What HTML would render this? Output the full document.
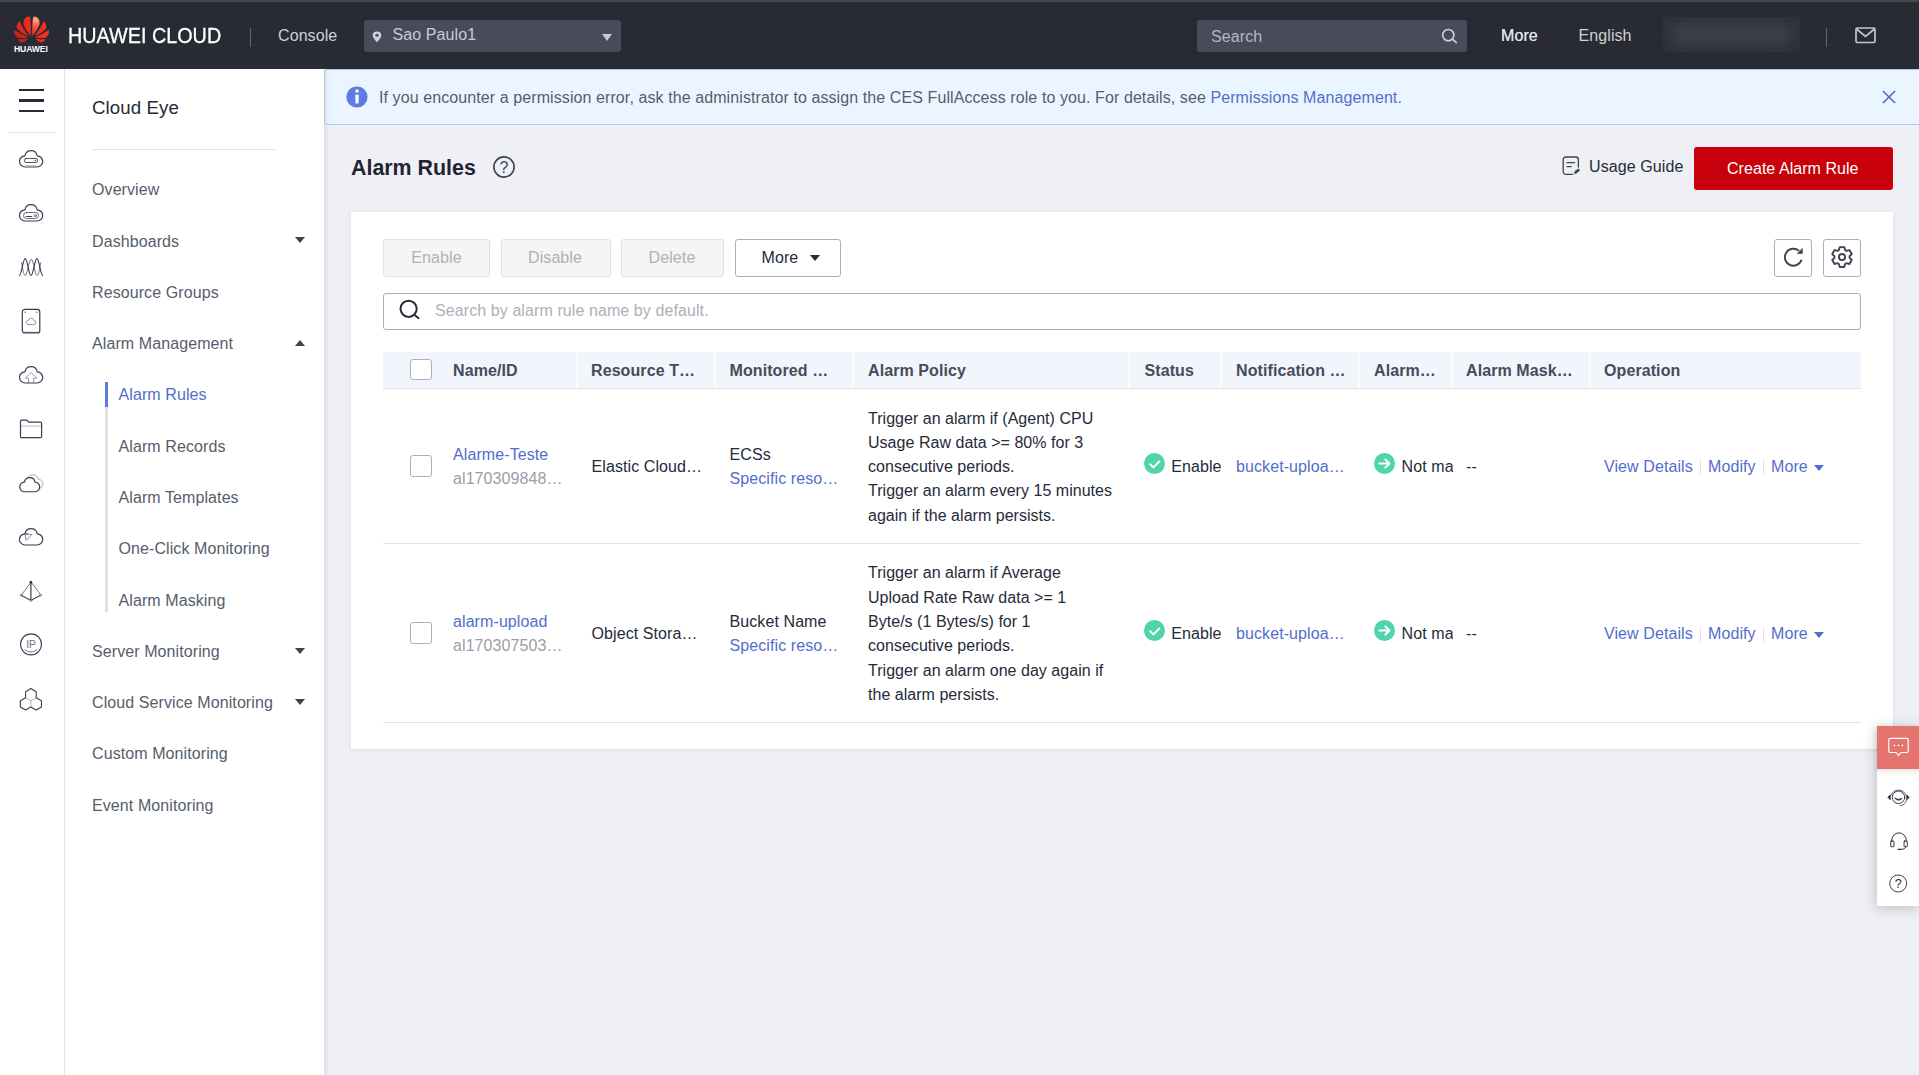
<!DOCTYPE html>
<html lang="en">
<head>
<meta charset="utf-8">
<title>Cloud Eye - Alarm Rules</title>
<style>
*{box-sizing:border-box;margin:0;padding:0}
html,body{width:1919px;height:1075px;overflow:hidden}
body{position:relative;font-family:"Liberation Sans",Arial,sans-serif;font-size:16px;letter-spacing:.09px;color:#252b3a;background:#eff0f5}
.abs,.t{position:absolute}
.t{line-height:24px;white-space:nowrap}
svg{position:absolute;overflow:visible}
a{color:#526ecc;text-decoration:none}

/* top */
#strip{left:0;top:0;width:1919px;height:2px;background:#454745}
#hdr{left:0;top:2px;width:1919px;height:66.5px;background:#282b33}
#hdr .t{color:#cfd1d7}
#brand{left:68.2px;top:19px;font-size:21.4px;line-height:30px;letter-spacing:0;color:#fff!important;transform:scaleX(.925);transform-origin:0 0;-webkit-text-stroke:.3px #fff}
#logotxt{left:14px;top:41px;font-size:8.6px;line-height:12px;font-weight:bold;color:#fff!important;letter-spacing:-.1px}
.vsep{width:1px;background:#62656f}
.dbox{background:#474b5a;border-radius:3px}

/* left rail */
#rail{left:0;top:68.5px;width:65px;height:1007px;background:#fff;border-right:1px solid #dfe1e6}
#side{left:65px;top:68.5px;width:259px;height:1007px;background:#fff}
.s{left:92px;color:#575d6c}
.s.sub{left:118.5px}
.s.on{color:#526ecc}
.car{position:absolute;width:0;height:0;border-left:5px solid transparent;border-right:5px solid transparent}
.car.dn{border-top:6px solid #3e4352}
.car.up{border-bottom:6px solid #3e4352}

/* main */
#banner{left:324px;top:69px;width:1596px;height:56px;background:#ebf5ff;border:1px solid #b8c6f4;border-radius:3px 0 0 3px}
#card{left:351px;top:212px;width:1542px;height:537px;background:#fff;box-shadow:0 1px 4px rgba(60,64,80,.10)}
.btn{position:absolute;top:239px;height:38px;border:1px solid #adb0b8;border-radius:3px;background:#fff;text-align:center;line-height:35px;color:#252b3a}
.btn.dis{background:#f5f5f6;border-color:#dfe1e6;color:#adb0b8}
.cb{position:absolute;width:22px;height:21.5px;border:1px solid #adb0b8;border-radius:3px;background:#fff}
#thead{left:383px;top:352px;width:1478px;height:37px;background:#f2f5fc;border-bottom:1px solid #dfe1e6}
.th{position:absolute;top:358.5px;line-height:24px;font-weight:bold;color:#464c59;white-space:nowrap}
.csep{position:absolute;top:352px;width:2px;height:36px;background:#fbfcff}
.hr{position:absolute;left:383px;width:1478px;height:1px;background:#dfe1e6}
.gray{color:#9b9ea6}
</style>
</head>
<body>
<div id="strip" class="abs"></div>
<div id="hdr" class="abs">
  <!-- Huawei logo -->
  <svg style="left:14.050px;top:13.900px" width="35.100" height="27" viewBox="130 170 755 580">
    <defs>
      <radialGradient id="lg1" gradientUnits="userSpaceOnUse" cx="600" cy="250" r="330"><stop offset="0" stop-color="#ffb08a"/><stop offset=".45" stop-color="#f4553c"/><stop offset="1" stop-color="#ec2a1e"/></radialGradient>
      <linearGradient id="lg2" gradientUnits="userSpaceOnUse" x1="700" y1="250" x2="200" y2="720"><stop offset="0" stop-color="#f13324"/><stop offset=".6" stop-color="#ea271c"/><stop offset="1" stop-color="#b81f18"/></linearGradient>
    </defs>
    <g fill="url(#lg2)">
      <path d="M492 600C400 480 310 360 340 270C360 200 430 170 470 185C495 260 495 450 492 600Z"/>
      <path d="M450 605C380 520 290 400 250 285C200 330 170 400 200 450C270 520 380 580 450 605Z"/>
      <path d="M566 605C636 520 726 400 766 285C816 330 846 400 816 450C746 520 636 580 566 605Z"/>
      <path d="M430 632C330 580 220 520 140 472C120 520 140 580 200 640C280 650 370 645 430 632Z"/>
      <path d="M586 632C686 580 796 520 876 472C896 520 876 580 816 640C736 650 646 645 586 632Z"/>
      <path d="M205 668L420 665C390 700 340 735 290 745C250 720 220 695 205 668Z"/>
      <path d="M811 668L596 665C626 700 676 735 726 745C766 720 796 695 811 668Z"/>
    </g>
    <path fill="url(#lg1)" d="M524 600C616 480 706 360 676 270C656 200 586 170 546 185C521 260 521 450 524 600Z"/>
  </svg>
  <div class="t" id="logotxt">HUAWEI</div>
  <div class="t" id="brand">HUAWEI CLOUD</div>
  <div class="abs vsep" style="left:250px;top:26px;height:19px"></div>
  <div class="t" style="left:278px;top:21.500px">Console</div>
  <div class="abs dbox" style="left:364px;top:18px;width:257px;height:32px"></div>
  <svg style="left:372px;top:28.600px" width="10" height="11.500" viewBox="0 0 10 13" preserveAspectRatio="none"><path d="M5 .6A4.3 4.300 0 0 0 .7 4.900C.7 8 5 12.600 5 12.600S9.300 8 9.300 4.900A4.300 4.300 0 0 0 5 .6Z" fill="#d0d2d8"/><circle cx="5" cy="4.900" r="1.700" fill="#474b5a"/></svg>
  <div class="t" style="left:392.500px;top:20.500px;color:#c9cbd2">Sao Paulo1</div>
  <div class="car dn" style="left:601.500px;top:32px;border-top-color:#c9cbd2;border-top-width:7px"></div>
  <div class="abs dbox" style="left:1197px;top:18px;width:270px;height:32px"></div>
  <div class="t" style="left:1211px;top:22.500px;color:#b4b7c0">Search</div>
  <svg style="left:1440px;top:25px" width="18" height="18" viewBox="0 0 18 18"><circle cx="8.300" cy="8.100" r="5.600" fill="none" stroke="#d0d2d8" stroke-width="1.600"/><path d="M12.400 12.200 L16.300 15.700" stroke="#d0d2d8" stroke-width="1.700" stroke-linecap="round"/></svg>
  <div class="t" style="left:1501px;top:21.500px;color:#e2e3e8;text-shadow:0 0 .4px #e2e3e8">More</div>
  <div class="t" style="left:1578.500px;top:21.500px">English</div>
  <div class="abs" style="left:1663px;top:15px;width:137px;height:35px;background:#2e313a;overflow:hidden"><div class="abs" style="left:8px;top:7px;width:121px;height:20px;background:#3e414b;border-radius:10px;filter:blur(7px)"></div></div>
  <div class="abs vsep" style="left:1826px;top:26px;height:19px"></div>
  <svg style="left:1855px;top:25px" width="21" height="17" viewBox="0 0 21 17"><rect x="1" y="1" width="19" height="14.500" rx="1.500" fill="none" stroke="#c4c6cf" stroke-width="1.700"/><path d="M1.500 2 L10.500 9.300 L19.500 2" fill="none" stroke="#c4c6cf" stroke-width="1.700"/></svg>
</div>

<!-- icon rail -->
<div id="rail" class="abs"></div>
<div id="side" class="abs"></div>
<!-- hamburger -->
<div class="abs" style="left:19px;top:88.500px;width:25px;height:2.500px;background:#252b3a"></div>
<div class="abs" style="left:19px;top:99px;width:25px;height:2.500px;background:#252b3a"></div>
<div class="abs" style="left:19px;top:109.500px;width:25px;height:2.500px;background:#252b3a"></div>
<div class="abs" style="left:8px;top:132px;width:48px;height:1px;background:#dfe1e6"></div>
<svg width="0" height="0" style="left:0;top:0"><defs><path id="cl" d="M7.150 18H19A5.600 5.600 0 0 0 19.190 6.800A6.200 6.200 0 0 0 6.970 6.800A5.600 5.600 0 0 0 7.150 18Z"/></defs></svg>
<div>
<!-- 1 cloud server -->
<svg style="left:18px;top:149px" width="26" height="20" viewBox="0 0 26 20" fill="none" stroke="#3a3f50" stroke-width="1.200" stroke-linecap="round" stroke-linejoin="round">
  <use href="#cl"/>
  <rect x="6.500" y="9.500" width="13" height="4" rx="1.600" stroke-width=".9"/><circle cx="17.300" cy="11.500" r=".7" fill="#3a3f50" stroke="none"/>
  <path d="M7.500 16.500H18.300" stroke-width=".8" stroke="#b4b7c0"/>
</svg>
<!-- 2 cloud server 2 -->
<svg style="left:18px;top:203px" width="26" height="20" viewBox="0 0 26 20" fill="none" stroke="#3a3f50" stroke-width="1.200" stroke-linecap="round" stroke-linejoin="round">
  <use href="#cl"/>
  <rect x="5.500" y="9.500" width="15" height="6" rx="3" stroke-width=".9" stroke="#555a69"/>
  <path d="M8.200 13.500H13.800" stroke-width="1"/><circle cx="17.300" cy="12.700" r="1.100" stroke-width=".7"/>
</svg>
<!-- 3 waves -->
<svg style="left:18px;top:257px" width="26" height="20" viewBox="0 0 26 20" fill="none" stroke="#3a3f50" stroke-width="1.150" stroke-linecap="round" stroke-linejoin="round">
  <path d="M3.400 5.750C4.600 10 5.400 18.500 7.300 18.500S10.900 2.300 13.200 2.300S17.100 18.500 19 18.500S21.600 10 22.800 5.750" stroke-width=".9" stroke="#5f6473"/>
  <path d="M1.300 18.500C3.600 18.500 4.900 1.600 7.200 1.600S10.700 18.500 13 18.500S16.600 1.600 18.900 1.600S22.500 18.500 24.800 18.500"/>
</svg>
<!-- 4 device w/ cloud -->
<svg style="left:21px;top:308px" width="20" height="26" viewBox="0 0 20 26" fill="none" stroke="#3a3f50" stroke-width="1.200" stroke-linecap="round" stroke-linejoin="round">
  <rect x="1.300" y="1.300" width="17.500" height="23.700" rx="2.600"/>
  <path d="M3.500 24.300H16.500" stroke-width=".8"/>
  <circle cx="4.400" cy="4.200" r=".65" fill="#3a3f50" stroke="none"/><circle cx="15.900" cy="4.200" r=".65" fill="#3a3f50" stroke="none"/>
  <use href="#cl" transform="translate(4.880 9.440) scale(.4)" stroke-width="1.800" stroke="#6b7080"/>
</svg>
<!-- 5 cloud upload -->
<svg style="left:18px;top:365px" width="26" height="20" viewBox="0 0 26 20" fill="none" stroke="#3a3f50" stroke-width="1.200" stroke-linecap="round" stroke-linejoin="round">
  <path d="M10.500 17.800V13.200H7.400L13.080 7.500L18.800 13.200H15.600V17.800" stroke-width=".8" stroke="#7d8190"/>
  <use href="#cl"/>
</svg>
<!-- 6 folder -->
<svg style="left:19px;top:419px" width="24" height="20" viewBox="0 0 24 20" fill="none" stroke="#3a3f50" stroke-width="1.200" stroke-linecap="round" stroke-linejoin="round">
  <path d="M1.600 7.100H22.400" stroke-width=".7" stroke="#9a9eaa"/>
  <path d="M1.500 2.300A1.200 1.200 0 0 1 2.700 1.100H8L9.800 3.200H21.400A1.200 1.200 0 0 1 22.600 4.400V17.500A1.200 1.200 0 0 1 21.400 18.700H2.700A1.200 1.200 0 0 1 1.500 17.500Z"/>
</svg>
<!-- 7 double cloud -->
<svg style="left:18px;top:472px" width="27" height="21" viewBox="0 0 27 21" fill="none" stroke="#3a3f50" stroke-width="1.200" stroke-linecap="round" stroke-linejoin="round">
  <use href="#cl" transform="translate(3.670 1.290) scale(.86)" stroke-width=".8" stroke="#8a8e99"/>
  <use href="#cl" transform="translate(.47 4.290) scale(.86)" stroke-width="1.400" fill="#fff"/>
</svg>
<!-- 8 cloud w/ triangle -->
<svg style="left:18px;top:527px" width="26" height="20" viewBox="0 0 26 20" fill="none" stroke="#3a3f50" stroke-width="1.200" stroke-linecap="round" stroke-linejoin="round">
  <use href="#cl"/>
  <path d="M6.970 6.800A5.600 5.600 0 0 1 9.800 7.500" stroke-width=".9"/>
  <path d="M7.200 6.600L13.900 7.600L8.500 13.200Z" stroke-width=".7" stroke="#555a69"/>
</svg>
<!-- 9 pyramid -->
<svg style="left:19px;top:579px" width="24" height="24" viewBox="0 0 24 24" fill="none" stroke="#3a3f50" stroke-width=".7" stroke-linecap="round" stroke-linejoin="round">
  <path d="M11.900 3.300L2.200 16.300L11.900 21.400L21.500 16.300Z"/><path d="M11.900 3.300V21.400" stroke-width="1.200"/>
  <path d="M2.200 16.300L11.900 21.400L21.500 16.300" stroke-width=".9"/>
  <rect x="10.700" y="1.900" width="2.400" height="2.600" rx=".7" fill="#252b3a" stroke="none"/>
  <circle cx="2.200" cy="16.300" r="1" fill="#fff" stroke-width=".6"/><circle cx="21.500" cy="16.300" r="1" fill="#fff" stroke-width=".6"/><circle cx="11.900" cy="21.400" r="1" fill="#fff" stroke-width=".6"/>
</svg>
<!-- 10 IP -->
<svg style="left:19px;top:632px" width="24" height="24" viewBox="0 0 24 24" fill="none" stroke="#3a3f50" stroke-width="1.100" stroke-linecap="round">
  <circle cx="12" cy="12.350" r="10.500"/>
  <path d="M6 17.600A8 8 0 0 0 18 17.600" stroke-width=".7"/>
  <text x="12" y="15.800" text-anchor="middle" font-family="Liberation Sans,Arial,sans-serif" font-size="10.200" letter-spacing="0" fill="#6b7080" stroke="none">IP</text>
</svg>
<!-- 11 hexagons -->
<svg style="left:19px;top:687px" width="24" height="24" viewBox="0 0 24 24" fill="none" stroke="#3a3f50" stroke-width="1.100" stroke-linejoin="round">
  <path d="M11.900 13.800V19.900M6.620 10.750L11.900 13.800L17.180 10.750" stroke-width=".6" stroke="#7d8190"/>
  <path d="M11.900 1.600L17.180 4.650V10.750L22.460 13.800V19.900L17.180 22.950L11.900 19.900L6.620 22.950L1.340 19.900V13.800L6.620 10.750V4.650Z"/>
</svg>
</div>
<div class="t" style="left:92px;top:96px;font-size:18.670px;color:#252b3a">Cloud Eye</div>
<div class="abs" style="left:92px;top:149px;width:183px;height:1px;background:#dfe1e6"></div>
<div class="abs" style="left:105px;top:382px;width:3px;height:230px;background:#dfe1e6"></div>
<div class="abs" style="left:105px;top:382px;width:3px;height:25px;background:#5e7ce0"></div>
<div class="t s" style="top:178px">Overview</div>
<div class="t s" style="top:230px">Dashboards</div>
<div class="car dn" style="left:295px;top:237px"></div>
<div class="t s" style="top:281px">Resource Groups</div>
<div class="t s" style="top:332px">Alarm Management</div>
<div class="car up" style="left:295px;top:340px"></div>
<div class="t s sub on" style="top:383px">Alarm Rules</div>
<div class="t s sub" style="top:435px">Alarm Records</div>
<div class="t s sub" style="top:486px">Alarm Templates</div>
<div class="t s sub" style="top:537px">One-Click Monitoring</div>
<div class="t s sub" style="top:589px">Alarm Masking</div>
<div class="t s" style="top:640px">Server Monitoring</div>
<div class="car dn" style="left:295px;top:648px"></div>
<div class="t s" style="top:691px">Cloud Service Monitoring</div>
<div class="car dn" style="left:295px;top:699px"></div>
<div class="t s" style="top:742px">Custom Monitoring</div>
<div class="t s" style="top:794px">Event Monitoring</div>
<div id="banner" class="abs"></div>
<svg style="left:346.100px;top:86.200px" width="22" height="22" viewBox="0 0 22 22"><circle cx="11" cy="11" r="10.600" fill="#5e7ce0"/><rect x="9.400" y="3.500" width="3.200" height="3.100" rx=".4" fill="#fff"/><path d="M9.200 8.700H12.800L12.500 17.400H9.600Z" fill="#fff"/></svg>
<div class="t" style="left:379px;top:85.5px;color:#575d6c">If you encounter a permission error, ask the administrator to assign the CES FullAccess role to you. For details, see <a>Permissions Management.</a></div>
<svg style="left:1882px;top:90px" width="14" height="14" viewBox="0 0 14 14"><path d="M1 1L13 13M13 1L1 13" stroke="#526ecc" stroke-width="1.700" fill="none"/></svg>
<div class="t" style="left:351px;top:156px;font-size:21.400px;font-weight:bold;letter-spacing:0;color:#1f2430">Alarm Rules</div>
<svg style="left:493px;top:156.200px" width="22" height="22" viewBox="0 0 22 22"><circle cx="11" cy="11" r="10.100" fill="none" stroke="#3e4352" stroke-width="1.600"/><text x="11" y="16.800" text-anchor="middle" font-family="Liberation Sans,Arial,sans-serif" font-size="16" letter-spacing="0" fill="#3e4352">?</text></svg>
<svg style="left:1562px;top:156px" width="18" height="20" viewBox="0 0 18 20" fill="none" stroke="#3e4352" stroke-width="1.300" stroke-linecap="round" stroke-linejoin="round">
  <path d="M10.500 18.400H3.800A2.600 2.600 0 0 1 1.200 15.800V3.600A2.600 2.600 0 0 1 3.800 1H13.800A2.600 2.600 0 0 1 16.400 3.600V11"/>
  <path d="M5 6.600H12.600M5 10.600H9.200"/>
  <path d="M12.400 17.600L13 15.200L16.400 12.800L17.600 14.400L14.600 17Z" fill="#3e4352" stroke-width=".6"/>
</svg>
<div class="t" style="left:1589px;top:154.5px">Usage Guide</div>
<div class="abs" style="left:1694px;top:147px;width:199px;height:43px;background:#c7000b;border-radius:3px"></div>
<div class="t" style="left:1727px;top:156.5px;color:#fff;letter-spacing:.05px">Create Alarm Rule</div>
<div id="card" class="abs"></div>
<div class="btn dis" style="left:383px;width:107px">Enable</div>
<div class="btn dis" style="left:501px;width:110px;padding-right:2px">Disable</div>
<div class="btn dis" style="left:621px;width:103px;padding-right:1px">Delete</div>
<div class="btn" style="left:735px;width:106px;text-align:left;padding-left:25.500px">More</div>
<div class="car dn" style="left:810px;top:255px;border-top-color:#252b3a"></div>
<div class="btn" style="left:1774px;width:38px"></div>
<div class="btn" style="left:1823px;width:38px"></div>
<svg style="left:1781px;top:246px" width="24" height="24" viewBox="0 0 24 24" fill="none" stroke="#3e4352" stroke-width="1.900" stroke-linecap="butt" stroke-linejoin="round">
  <path d="M20.530 13.690A8.500 8.500 0 1 1 18.090 4.880"/><path d="M21.390 2.400V7.600H16.200Z" fill="#3e4352" stroke-width=".6"/>
</svg>
<svg style="left:1830px;top:246px" width="24" height="24" viewBox="0 0 24 24" fill="none" stroke="#3e4352" stroke-width="1.900" stroke-linejoin="round">
  <circle cx="12" cy="11.050" r="3.100"/>
  <path d="M15.09 4.11L14.29 1.11L9.71 1.11L8.91 4.11L7.53 4.90L4.54 4.09L2.25 8.07L4.44 10.26L4.44 11.84L2.25 14.03L4.54 18.01L7.53 17.20L8.91 17.99L9.71 20.99L14.29 20.99L15.09 17.99L16.47 17.20L19.46 18.01L21.75 14.03L19.56 11.84L19.56 10.26L21.75 8.07L19.46 4.09L16.47 4.90Z"/>
</svg>
<div class="abs" style="left:383px;top:293px;width:1478px;height:37px;border:1px solid #adb0b8;border-radius:3px;background:#fff"></div>
<svg style="left:398px;top:299px" width="24" height="24" viewBox="0 0 24 24" fill="none" stroke="#252b3a" stroke-width="2" stroke-linecap="round"><circle cx="10.600" cy="9.800" r="8.100"/><path d="M16.400 15.800L20.600 19.200"/></svg>
<div class="t" style="left:435px;top:298.5px;color:#adb0b8">Search by alarm rule name by default.</div>
<div id="thead" class="abs"></div>
<div class="csep" style="left:576px"></div><div class="csep" style="left:714px"></div><div class="csep" style="left:852px"></div><div class="csep" style="left:1128px"></div><div class="csep" style="left:1220px"></div><div class="csep" style="left:1358px"></div><div class="csep" style="left:1451px"></div><div class="csep" style="left:1589px"></div>
<div class="cb" style="left:410px;top:359px;height:21px"></div>
<div class="th" style="left:453px">Name/ID</div>
<div class="th" style="left:591px">Resource T…</div>
<div class="th" style="left:729.5px">Monitored …</div>
<div class="th" style="left:868px">Alarm Policy</div>
<div class="th" style="left:1144.5px">Status</div>
<div class="th" style="left:1236px">Notification …</div>
<div class="th" style="left:1374px">Alarm…</div>
<div class="th" style="left:1466px">Alarm Mask…</div>
<div class="th" style="left:1604px">Operation</div>
<div class="cb" style="left:410px;top:455px"></div>
<div class="t" style="left:453px;top:442.5px"><a>Alarme-Teste</a></div>
<div class="t gray" style="left:453px;top:466.5px">al170309848…</div>
<div class="t" style="left:591.5px;top:454.5px">Elastic Cloud…</div>
<div class="t" style="left:729.5px;top:442.5px">ECSs</div>
<div class="t" style="left:729.5px;top:466.5px"><a>Specific reso…</a></div>
<div class="t" style="left:868px;top:406.5px;letter-spacing:.03px">Trigger an alarm if (Agent) CPU</div>
<div class="t" style="left:868px;top:430.5px;letter-spacing:.03px">Usage Raw data &gt;= 80% for 3</div>
<div class="t" style="left:868px;top:454.5px;letter-spacing:.03px">consecutive periods.</div>
<div class="t" style="left:868px;top:478.5px;letter-spacing:.03px">Trigger an alarm every 15 minutes</div>
<div class="t" style="left:868px;top:503.5px;letter-spacing:.03px">again if the alarm persists.</div>
<svg style="left:1144px;top:453px" width="21" height="21" viewBox="0 0 21 21"><circle cx="10.500" cy="10.500" r="10.500" fill="#50d4ab"/><path d="M5.700 10.700L9.400 14.400L15.800 8" fill="none" stroke="#fff" stroke-width="2" stroke-linecap="butt" stroke-linejoin="miter"/></svg>
<div class="t" style="left:1171.2px;top:454.5px">Enable</div>
<div class="t" style="left:1236px;top:454.5px"><a>bucket-uploa…</a></div>
<svg style="left:1374.200px;top:453px" width="21" height="21" viewBox="0 0 21 21"><circle cx="10.500" cy="10.500" r="10.500" fill="#50d4ab"/><path d="M5.300 10.500H15.200M11.300 6.300L15.500 10.500L11.300 14.700" fill="none" stroke="#fff" stroke-width="1.900" stroke-linecap="round" stroke-linejoin="round"/></svg>
<div class="t" style="left:1401.6px;top:454.5px;width:51px;overflow:hidden">Not marked</div>
<div class="t" style="left:1466px;top:454.5px">--</div>
<div class="t" style="left:1604px;top:454.5px"><a>View Details</a></div>
<div class="abs" style="left:1700px;top:459.5px;width:1px;height:15px;background:#dfe1e6"></div>
<div class="t" style="left:1708px;top:454.5px"><a>Modify</a></div>
<div class="abs" style="left:1763px;top:459.5px;width:1px;height:15px;background:#dfe1e6"></div>
<div class="t" style="left:1771px;top:454.5px"><a>More</a></div>
<div class="car dn" style="left:1814px;top:465px;border-top-color:#526ecc"></div>
<div class="hr" style="top:543px"></div>
<div class="cb" style="left:410px;top:622px"></div>
<div class="t" style="left:453px;top:609.5px"><a>alarm-upload</a></div>
<div class="t gray" style="left:453px;top:633.5px">al170307503…</div>
<div class="t" style="left:591.5px;top:621.5px">Object Stora…</div>
<div class="t" style="left:729.5px;top:609.5px">Bucket Name</div>
<div class="t" style="left:729.5px;top:633.5px"><a>Specific reso…</a></div>
<div class="t" style="left:868px;top:560.5px;letter-spacing:.03px">Trigger an alarm if Average</div>
<div class="t" style="left:868px;top:585.5px;letter-spacing:.03px">Upload Rate Raw data &gt;= 1</div>
<div class="t" style="left:868px;top:609.5px;letter-spacing:.03px">Byte/s (1 Bytes/s) for 1</div>
<div class="t" style="left:868px;top:633.5px;letter-spacing:.03px">consecutive periods.</div>
<div class="t" style="left:868px;top:658.5px;letter-spacing:.03px">Trigger an alarm one day again if</div>
<div class="t" style="left:868px;top:682.5px;letter-spacing:.03px">the alarm persists.</div>
<svg style="left:1144px;top:620px" width="21" height="21" viewBox="0 0 21 21"><circle cx="10.500" cy="10.500" r="10.500" fill="#50d4ab"/><path d="M5.700 10.700L9.400 14.400L15.800 8" fill="none" stroke="#fff" stroke-width="2" stroke-linecap="butt" stroke-linejoin="miter"/></svg>
<div class="t" style="left:1171.2px;top:621.5px">Enable</div>
<div class="t" style="left:1236px;top:621.5px"><a>bucket-uploa…</a></div>
<svg style="left:1374.200px;top:620px" width="21" height="21" viewBox="0 0 21 21"><circle cx="10.500" cy="10.500" r="10.500" fill="#50d4ab"/><path d="M5.300 10.500H15.200M11.300 6.300L15.500 10.500L11.300 14.700" fill="none" stroke="#fff" stroke-width="1.900" stroke-linecap="round" stroke-linejoin="round"/></svg>
<div class="t" style="left:1401.6px;top:621.5px;width:51px;overflow:hidden">Not marked</div>
<div class="t" style="left:1466px;top:621.5px">--</div>
<div class="t" style="left:1604px;top:621.5px"><a>View Details</a></div>
<div class="abs" style="left:1700px;top:626.5px;width:1px;height:15px;background:#dfe1e6"></div>
<div class="t" style="left:1708px;top:621.5px"><a>Modify</a></div>
<div class="abs" style="left:1763px;top:626.5px;width:1px;height:15px;background:#dfe1e6"></div>
<div class="t" style="left:1771px;top:621.5px"><a>More</a></div>
<div class="car dn" style="left:1814px;top:632px;border-top-color:#526ecc"></div>
<div class="hr" style="top:722px"></div>
<div class="abs" style="left:1877px;top:726px;width:42px;height:180px;background:#fff;box-shadow:-1px 2px 12px rgba(40,43,51,.25)"></div>
<div class="abs" style="left:1877px;top:726px;width:42px;height:43px;background:#e4746d;box-shadow:0 2px 5px rgba(40,43,51,.16)"></div>
<svg style="left:1887px;top:737px" width="23" height="21" viewBox="0 0 23 21" fill="none" stroke="#fff" stroke-width="1.200" stroke-linejoin="round">
  <path d="M3.300 1.300H19.700A1.500 1.500 0 0 1 21.200 2.800V14A1.500 1.500 0 0 1 19.700 15.500H13.800L11.500 18.500L9.200 15.500H3.300A1.500 1.500 0 0 1 1.800 14V2.800A1.500 1.500 0 0 1 3.300 1.300Z"/>
  <circle cx="7.500" cy="8.400" r=".85" fill="#fff" stroke="none"/><circle cx="11.500" cy="8.400" r=".85" fill="#fff" stroke="none"/><circle cx="15.500" cy="8.400" r=".85" fill="#fff" stroke="none"/>
</svg>
<svg style="left:1887px;top:787px" width="23" height="21" viewBox="0 0 23 21" fill="none" stroke="#252b3a" stroke-width=".9" stroke-linecap="round">
  <circle cx="11.500" cy="10.300" r="6.300"/><path d="M4 8.300A8 8 0 0 1 19 8.300" stroke-width=".7"/>
  <path d="M7.800 11.300Q11.500 15.300 15.200 11.300Q11.500 13.300 7.800 11.300Z" fill="#252b3a" stroke-width=".7"/>
  <path d="M3 8.200L.9 10.300L3 12.500Z" fill="#252b3a" stroke-width=".8" stroke-linejoin="round"/><path d="M20 8.200L22.100 10.300L20 12.500Z" fill="#252b3a" stroke-width=".8" stroke-linejoin="round"/>
  <path d="M19.600 12.600C19 16.800 15.500 18.800 13 18.600" stroke-width=".7"/>
</svg>
<svg style="left:1888.500px;top:830.500px" width="20" height="20" viewBox="0 0 21 21" fill="none" stroke="#252b3a" stroke-width="1" stroke-linecap="round" stroke-linejoin="round">
  <path d="M3 11V9.500A7.500 7.500 0 0 1 18 9.500V11"/>
  <rect x="1.800" y="10.500" width="3.400" height="6" rx=".6"/><rect x="15.800" y="10.500" width="3.400" height="6" rx=".6"/>
  <path d="M17.500 16.500C17.500 18.500 15.500 19.300 12.500 19.300" /><path d="M9.800 19.300H12.500" stroke-width="1.500"/>
</svg>
<svg style="left:1888px;top:873px" width="21" height="21" viewBox="0 0 21 21"><circle cx="10.200" cy="10.500" r="8.500" fill="none" stroke="#252b3a" stroke-width=".9"/><text x="10.200" y="14.900" text-anchor="middle" font-family="Liberation Sans,Arial,sans-serif" font-size="12.500" letter-spacing="0" fill="#252b3a">?</text></svg>
<div class="abs" id="sideshadow" style="left:324px;top:69px;width:6px;height:1006px;background:linear-gradient(90deg,rgba(40,43,51,.075),rgba(40,43,51,0))"></div>
</body>
</html>
